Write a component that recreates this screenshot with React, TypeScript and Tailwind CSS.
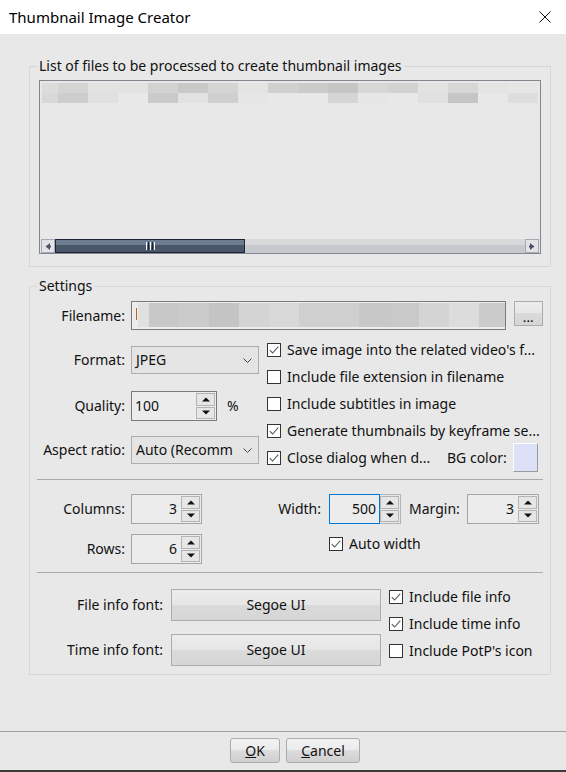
import React from "react";

const row1 = ["#dcdcdc", "#d4d4d4", "#e2e2e2", "#e2e2e2", "#d2d2d2", "#c9c9c9", "#d4d4d4", "#e4e4e4", "#d0d0d0", "#cbcbcb", "#c5c5c5", "#d7d7d7", "#d2d2d2", "#e2e2e2", "#d7d7d7", "#e4e4e4", "#e6e6e6"];
const row2 = ["#d8d8d8", "#cdcdcd", "#e0e0e0", "#e8e8e8", "#cacaca", "#e2e2e2", "#cfcfcf", "#e6e6e6", "#e8e8e8", "#e8e8e8", "#d5d5d5", "#e6e6e6", "#e8e8e8", "#e0e0e0", "#c6c6c6", "#e8e8e8", "#dedede"];
const fileBlocks = ["#c8c8c8", "#cbcbcb", "#c4c4c4", "#d4d4d4", "#d8d8d8", "#cfcfcf", "#cfcfcf", "#c8c8c8", "#c9c9c9", "#d4d4d4", "#dcdcdc", "#cbcbcb"];

function BlurRow({ colors }: { colors: string[] }) {
  return (
    <div className="flex h-[10px] shrink-0">
      {colors.map((c, i) => (
        <div key={i} className={i === 0 ? "w-[16px] h-full shrink-0" : "w-[30px] h-full shrink-0"} style={{ backgroundColor: c }} />
      ))}
    </div>
  );
}

function Check({ checked }: { checked: boolean }) {
  return (
    <span className="w-[14px] h-[14px] border border-[#333333] bg-white flex items-center justify-center shrink-0">
      {checked && (
        <svg width="12" height="12" viewBox="0 0 12 12">
          <path d="M1.8 6.2 L4.6 9 L10.3 2.6" fill="none" stroke="#5a5a5a" strokeWidth="1.1" />
        </svg>
      )}
    </span>
  );
}

function CheckRow({ checked, label }: { checked: boolean; label: string }) {
  return (
    <div className="h-[27px] flex items-center shrink-0">
      <Check checked={checked} />
      <span className="ml-[6px] whitespace-nowrap">{label}</span>
    </div>
  );
}

function SpinBtns() {
  return (
    <div className="flex flex-col w-[20px] h-full gap-[1px] py-[1px] pr-[1px] shrink-0">
      <div className="flex-1 border border-[#b4b4b4] bg-[#e6e6e6] flex items-center justify-center">
        <svg width="8" height="5" viewBox="0 0 8 5">
          <path d="M0 4.5 L4 0.5 L8 4.5 Z" fill="#111" />
        </svg>
      </div>
      <div className="flex-1 border border-[#b4b4b4] bg-[#e6e6e6] flex items-center justify-center">
        <svg width="8" height="5" viewBox="0 0 8 5">
          <path d="M0 0.5 L4 4.5 L8 0.5 Z" fill="#111" />
        </svg>
      </div>
    </div>
  );
}

function Btn3d({ className, children }: { className: string; children: React.ReactNode }) {
  return (
    <div className={"border border-[#acacac] bg-[linear-gradient(to_bottom,#ececec_0%,#e6e6e6_50%,#dadada_50%,#d6d6d6_100%)] flex items-center justify-center shrink-0 " + className}>
      {children}
    </div>
  );
}

export default function App() {
  return (
    <div className="w-[566px] h-[772px] bg-[#e8e8e8] flex flex-col overflow-hidden font-['Noto_Sans','Open_Sans',sans-serif] text-[14px] leading-[20px] text-[#111]">
      {/* title bar */}
      <div className="h-[34px] bg-white flex items-center justify-between pl-[9px] pr-[15px] shrink-0">
        <span className="text-[15px] text-black">Thumbnail Image Creator</span>
        <svg width="12" height="12" viewBox="0 0 12 12">
          <path d="M0.5 0.5 L11.5 11.5 M11.5 0.5 L0.5 11.5" stroke="#111" strokeWidth="1" />
        </svg>
      </div>

      <div className="flex-1 flex flex-col pl-[29px]">
        {/* Group 1 */}
        <fieldset className="mt-[22px] w-[522px] border border-[#d6d6d6] pb-[12px]">
          <legend className="ml-[7px] px-[2px] leading-[20px]">List of files to be processed to create thumbnail images</legend>
          <div className="mt-[4px] ml-[9px] w-[502px] h-[174px] border border-[#828790] flex flex-col overflow-hidden">
            <div className="mt-[2px] ml-[2px] flex flex-col overflow-hidden">
              <BlurRow colors={row1} />
              <BlurRow colors={row2} />
            </div>
            <div className="mt-auto mx-[1px] h-[14px] flex shrink-0">
              <div className="w-[14px] h-full border border-[#a4aab4] bg-[#e2e3e5] flex items-center justify-center">
                <svg width="6" height="7" viewBox="0 0 6 7">
                  <path d="M5 0 L0.5 3.5 L5 7 Z" fill="#4a5568" />
                  <rect x="4" y="2.5" width="2" height="2" fill="#4a5568" />
                </svg>
              </div>
              <div className="w-[190px] h-full border border-[#1e2633] bg-[linear-gradient(to_bottom,#6e7c90_0%,#6e7c90_40%,#4a5669_40%,#4a5669_100%)] flex items-center justify-center gap-[1px]">
                <div className="w-[1px] h-[8px] bg-white" />
                <div className="w-[1px] h-[8px] bg-[#1e2633]" />
                <div className="w-[1px] h-[8px] bg-white" />
                <div className="w-[1px] h-[8px] bg-[#1e2633]" />
                <div className="w-[1px] h-[8px] bg-white" />
              </div>
              <div className="flex-1 h-full bg-[linear-gradient(to_bottom,#d8d9db_0%,#d8d9db_45%,#c6c9ce_45%,#c6c9ce_100%)]" />
              <div className="w-[14px] h-full border border-[#a4aab4] bg-[#e2e3e5] flex items-center justify-center">
                <svg width="6" height="7" viewBox="0 0 6 7">
                  <path d="M1 0 L5.5 3.5 L1 7 Z" fill="#4a5568" />
                  <rect x="0" y="2.5" width="2" height="2" fill="#4a5568" />
                </svg>
              </div>
            </div>
          </div>
        </fieldset>

        {/* Group 2: Settings */}
        <fieldset className="mt-[9px] w-[522px] border border-[#d6d6d6] pb-[8px]">
          <legend className="ml-[7px] px-[2px] leading-[20px]">Settings</legend>

          {/* filename row */}
          <div className="mt-[5px] flex items-start">
            <div className="w-[95px] h-[29px] flex items-center justify-end">Filename:</div>
            <div className="ml-[6px] w-[375px] h-[29px] border border-[#7a7a7a] bg-[#ececec] flex items-start pt-[1px] pl-[4px] overflow-hidden">
              <div className="w-[1px] h-[12px] mt-[5px] bg-[#b5651d] shrink-0" />
              <div className="ml-[1px] w-[11px] h-[24px] bg-[#e0e0e0] shrink-0" />
              {fileBlocks.map((c, i) => (
                <div key={i} className="w-[30px] h-[24px] shrink-0" style={{ backgroundColor: c }} />
              ))}
            </div>
            <Btn3d className="ml-[8px] w-[29px] h-[25px] items-end pb-[2px]">
              <span className="text-[11px] leading-[10px] font-bold tracking-[0.5px]">...</span>
            </Btn3d>
          </div>

          {/* middle section */}
          <div className="mt-[6px] h-[136px] flex">
            <div className="w-[237px] flex flex-col shrink-0">
              <div className="mt-[10px] h-[28px] flex items-center">
                <div className="w-[95px] text-right">Format:</div>
                <div className="ml-[6px] w-[128px] h-full border border-[#adadad] bg-[#e4e4e4] flex items-center pl-[4px] pr-[6px]">
                  <span className="flex-1 whitespace-nowrap">JPEG</span>
                  <svg width="9" height="5" viewBox="0 0 9 5">
                    <path d="M0.5 0.5 L4.5 4.5 L8.5 0.5" stroke="#444" fill="none" strokeWidth="1" />
                  </svg>
                </div>
              </div>
              <div className="mt-[17px] h-[30px] flex items-center">
                <div className="w-[95px] text-right">Quality:</div>
                <div className="ml-[6px] w-[86px] h-full border border-[#7a7a7a] bg-[#ececec] flex">
                  <div className="flex-1 flex items-center pl-[3px]">100</div>
                  <SpinBtns />
                </div>
                <span className="ml-[10px]">%</span>
              </div>
              <div className="mt-[15px] h-[28px] flex items-center">
                <div className="w-[95px] text-right whitespace-nowrap">Aspect ratio:</div>
                <div className="ml-[6px] w-[128px] h-full border border-[#adadad] bg-[#e4e4e4] flex items-center pl-[4px] pr-[6px]">
                  <span className="flex-1 whitespace-nowrap">Auto (Recomm</span>
                  <svg width="9" height="5" viewBox="0 0 9 5">
                    <path d="M0.5 0.5 L4.5 4.5 L8.5 0.5" stroke="#444" fill="none" strokeWidth="1" />
                  </svg>
                </div>
              </div>
            </div>
            <div className="flex flex-col">
              <CheckRow checked label="Save image into the related video's f..." />
              <CheckRow checked={false} label="Include file extension in filename" />
              <CheckRow checked={false} label="Include subtitles in image" />
              <CheckRow checked label="Generate thumbnails by keyframe se..." />
              <div className="h-[27px] flex items-center shrink-0">
                <Check checked />
                <span className="ml-[6px] w-[160px] whitespace-nowrap">Close dialog when d...</span>
                <span className="whitespace-nowrap">BG color:</span>
                <div className="ml-[6px] w-[25px] h-[29px] bg-[#dde1f7] border border-t-white border-l-white border-r-[#9a9a9a] border-b-[#9a9a9a]" />
              </div>
            </div>
          </div>

          <div className="mt-[7px] ml-[7px] w-[506px] h-[1px] bg-[#a9a9a9]" />

          {/* columns / width / margin */}
          <div className="mt-[14px] h-[30px] flex items-center">
            <div className="w-[95px] text-right">Columns:</div>
            <div className="ml-[6px] w-[71px] h-full border border-[#a5a5a5] bg-[#ececec] flex">
              <div className="flex-1 flex items-center justify-end pr-[4px]">3</div>
              <SpinBtns />
            </div>
            <div className="w-[119px] text-right">Width:</div>
            <div className="ml-[8px] h-full flex">
              <div className="w-[51px] h-full border border-[#0078d7] bg-[#ececec] flex items-center justify-end pr-[3px]">500</div>
              <div className="w-[21px] h-full border border-l-0 border-[#b4b4b4] flex">
                <SpinBtns />
              </div>
            </div>
            <div className="ml-[8px] w-[51px] whitespace-nowrap">Margin:</div>
            <div className="ml-[7px] w-[72px] h-full border border-[#a5a5a5] bg-[#ececec] flex">
              <div className="flex-1 flex items-center justify-end pr-[4px]">3</div>
              <SpinBtns />
            </div>
          </div>

          <div className="mt-[10px] h-[30px] flex items-start">
            <div className="w-[95px] h-full flex items-center justify-end">Rows:</div>
            <div className="ml-[6px] w-[71px] h-full border border-[#a5a5a5] bg-[#ececec] flex">
              <div className="flex-1 flex items-center justify-end pr-[4px]">6</div>
              <SpinBtns />
            </div>
            <div className="ml-[127px] h-[20px] flex items-center">
              <Check checked />
              <span className="ml-[6px]">Auto width</span>
            </div>
          </div>

          <div className="mt-[8px] ml-[7px] w-[506px] h-[1px] bg-[#a9a9a9]" />

          {/* fonts */}
          <div className="flex">
            <div className="flex flex-col">
              <div className="mt-[16px] h-[32px] flex items-center">
                <div className="w-[133px] text-right whitespace-nowrap">File info font:</div>
                <Btn3d className="ml-[8px] w-[210px] h-full">Segoe UI</Btn3d>
              </div>
              <div className="mt-[13px] h-[32px] flex items-center">
                <div className="w-[133px] text-right whitespace-nowrap">Time info font:</div>
                <Btn3d className="ml-[8px] w-[210px] h-full">Segoe UI</Btn3d>
              </div>
            </div>
            <div className="ml-[8px] mt-[10px] flex flex-col">
              <CheckRow checked label="Include file info" />
              <CheckRow checked label="Include time info" />
              <CheckRow checked={false} label="Include PotP's icon" />
            </div>
          </div>
        </fieldset>
      </div>

      {/* footer */}
      <div className="h-[41px] border-t border-[#a0a0a0] flex flex-col shrink-0">
        <div className="mt-[6px] pl-[230px] flex gap-[6px]">
          <div className="w-[50px] h-[25px] rounded-[3px] border border-[#acacac] bg-[linear-gradient(to_bottom,#f2f2f2_0%,#ebebeb_50%,#dddddd_50%,#cfcfcf_100%)] flex items-center justify-center">
            <span><span className="underline">O</span>K</span>
          </div>
          <div className="w-[74px] h-[25px] rounded-[3px] border border-[#acacac] bg-[linear-gradient(to_bottom,#f2f2f2_0%,#ebebeb_50%,#dddddd_50%,#cfcfcf_100%)] flex items-center justify-center">
            <span><span className="underline">C</span>ancel</span>
          </div>
        </div>
        <div className="mt-auto h-[2px] bg-[#3a3a3a]" />
      </div>
    </div>
  );
}
